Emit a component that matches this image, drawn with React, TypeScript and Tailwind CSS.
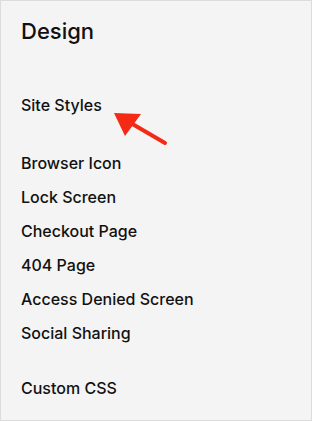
import React from "react";

const items = ["Browser Icon", "Lock Screen", "Checkout Page", "404 Page", "Access Denied Screen", "Social Sharing"];

export default function App() {
  return (
    <div className="relative w-[312px] h-[421px] border border-[#dcdcdc] bg-[#f4f4f4] text-[#111] [font-family:Inter,'Noto_Sans',sans-serif]">
      <div className="flex flex-col px-[20px] pt-[18px]">
        <div className="h-[24px] leading-[24px] text-[22px] font-medium">Design</div>
        <div className="mt-[45px] h-[34px] leading-[34px] text-[16px] font-medium">Site Styles</div>
        <div className="mt-[24px] flex flex-col">
          {items.map((t) => (
            <div key={t} className="h-[34px] leading-[34px] text-[16px] font-medium">{t}</div>
          ))}
        </div>
        <div className="mt-[21px] h-[34px] leading-[34px] text-[16px] font-medium">Custom CSS</div>
      </div>
      <svg className="absolute left-0 top-0" width="312" height="421" viewBox="0 0 312 421">
        <line x1="164" y1="142" x2="128" y2="121" stroke="#f52a15" strokeWidth="4" strokeLinecap="round" />
        <polygon points="113,112 140,113 124,135" fill="#f52a15" />
      </svg>
    </div>
  );
}
